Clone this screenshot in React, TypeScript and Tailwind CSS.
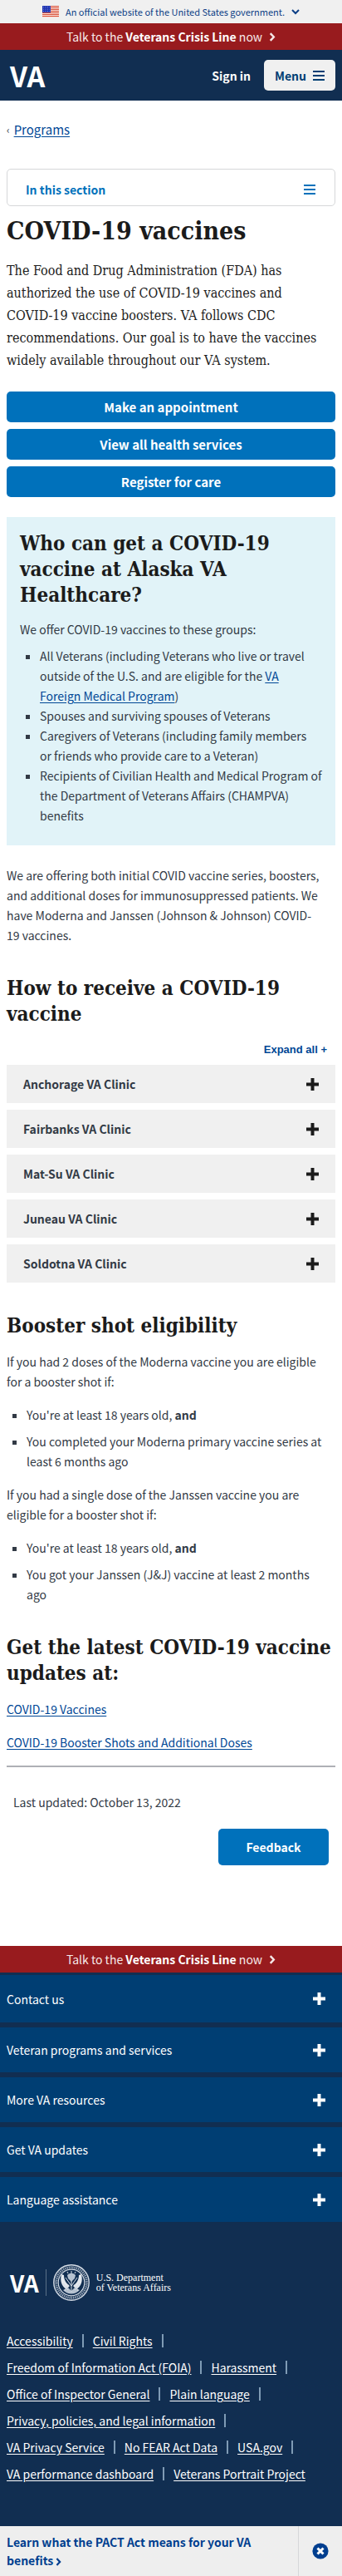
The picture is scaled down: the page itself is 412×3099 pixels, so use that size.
import React from "react";

const sans = "font-['Noto_Sans_CJK_SC','Liberation_Sans',sans-serif]";
const serif = "font-['DejaVu_Serif_Condensed','DejaVu_Serif',serif]";

function Bars({ className }: { className: string }) {
  return (
    <svg viewBox="0 0 14 12" className={className} fill="currentColor" aria-hidden="true">
      <rect y="0" width="14" height="2" />
      <rect y="5" width="14" height="2" />
      <rect y="10" width="14" height="2" />
    </svg>
  );
}

function Plus() {
  return (
    <svg viewBox="0 0 15 15" className="size-[15px] shrink-0" fill="currentColor" aria-hidden="true">
      <path d="M5.5 0h4v5.5H15v4H9.5V15h-4V9.500H0v-4h5.500z" />
    </svg>
  );
}

function ChevronRight({ className }: { className: string }) {
  return (
    <svg viewBox="0 0 8 12" className={className} fill="none" stroke="currentColor" strokeWidth="2.6" aria-hidden="true">
      <path d="M1.5 1.2 6 6 1.5 10.8" />
    </svg>
  );
}

function Flag() {
  return (
    <svg viewBox="0 0 20 14" className="h-[14px] w-5" aria-hidden="true">
      <rect width="20" height="14" fill="#fff" />
      {[0, 2, 4, 6, 8, 10, 12].map((y) => (
        <rect key={y} y={y} width="20" height="1.2" fill="#d9533b" />
      ))}
      <rect width="10" height="8" fill="#1e33b1" />
      {[1.5, 4, 6.5].map((y) =>
        [1.5, 4, 6.5, 9].map((x) => <circle key={`${x}-${y}`} cx={x} cy={y} r="0.5" fill="#9fb0ea" />)
      )}
    </svg>
  );
}

function Seal() {
  return (
    <svg viewBox="0 0 44 44" className="size-11" fill="none" stroke="#d6dde6" aria-hidden="true">
      <circle cx="22" cy="22" r="21.2" strokeWidth="1.4" />
      <circle cx="22" cy="22" r="18.4" strokeWidth="3" strokeDasharray="1.3 1" opacity="0.7" />
      <circle cx="22" cy="22" r="15.8" strokeWidth="1.2" />
      <path d="M10 12c-2 8 0 14 6 18l4-4c-4-3-7-7-7-13zM34 12c2 8 0 14-6 18l-4-4c4-3 7-7 7-13z" fill="#e4e9ef" stroke="none" />
      <path d="M17 13c3-3 7-3 10 0l-1 4-4 4-4-4zM12 31c6 6 14 6 20 0l-6-3-4 4-4-4z" fill="#b6c2d0" stroke="none" />
      <path d="m15 16 7 10 7-10M22 20v13M17 9l1 2M22 8v3M27 9l-1 2M12 23l6 8M32 23l-6 8M18 24l-4 8M26 24l4 8" strokeWidth="1" />
    </svg>
  );
}

function CrisisLine() {
  return (
    <a href="#crisis" className="flex h-8 items-center justify-center gap-2 bg-[#981b1e] text-[14px] leading-6 text-[#f6e9e9]">
      <span>
        Talk to the <strong className="text-white">Veterans Crisis Line</strong> now
      </span>
      <ChevronRight className="h-[11px] w-2" />
    </a>
  );
}

function Heading({ children, className }: { children: React.ReactNode; className: string }) {
  return <h2 className={`${serif} text-[24px] leading-[31px] font-bold text-[#1b1b1b] ${className}`}>{children}</h2>;
}

function TextLink({ children }: { children: React.ReactNode }) {
  return (
    <a href="#link" className="text-[#004795] underline underline-offset-2">
      {children}
    </a>
  );
}

const clinics = ["Anchorage VA Clinic", "Fairbanks VA Clinic", "Mat-Su VA Clinic", "Juneau VA Clinic", "Soldotna VA Clinic"];
const footerSections = ["Contact us", "Veteran programs and services", "More VA resources", "Get VA updates", "Language assistance"];
const footerLinks = [
  ["Accessibility", "Civil Rights"],
  ["Freedom of Information Act (FOIA)", "Harassment"],
  ["Office of Inspector General", "Plain language"],
  ["Privacy, policies, and legal information"],
  ["VA Privacy Service", "No FEAR Act Data", "USA.gov"],
  ["VA performance dashboard", "Veterans Portrait Project"],
];

export default function App() {
  return (
    <div className={`${sans} bg-white text-[14px] leading-6 text-[#323a45]`}>
      <button type="button" className="flex h-7 w-full items-center justify-center gap-2 bg-[#f0f0f0] text-[11px] text-[#0d3f86]">
        <Flag />
        <span>An official website of the United States government.</span>
        <svg viewBox="0 0 10 7" className="h-[7px] w-[10px]" fill="none" stroke="currentColor" strokeWidth="2" aria-hidden="true">
          <path d="m1 1 4 4 4-4" />
        </svg>
      </button>
      <CrisisLine />
      <header className="flex h-[61px] items-center justify-between bg-[#112e51] px-2">
        <a href="#home" className="pl-1 text-[34px] leading-none font-bold text-white" aria-label="VA home">
          VA
        </a>
        <div className="flex items-center gap-4">
          <button type="button" className="font-bold text-white">
            Sign in
          </button>
          <button type="button" className="flex h-[37px] items-center gap-2 rounded-[5px] bg-[#f0f0f0] px-[13px] font-bold text-[#003e73]">
            Menu
            <Bars className="h-3 w-[14px]" />
          </button>
        </div>
      </header>

      <main className="px-2">
        <nav aria-label="Breadcrumb" className="flex items-center gap-[5px] pt-[23px] text-[15px]">
          <span className="text-[12px]">‹</span>
          <TextLink>Programs</TextLink>
        </nav>
        <button
          type="button"
          className="mt-[35px] flex h-[45px] w-full items-center justify-between rounded-[5px] border border-[#d6d7d9] pt-1 pr-[23px] pl-[22px] font-bold text-[#0071bb]"
        >
          In this section
          <Bars className="h-3 w-[14px]" />
        </button>
        <h1 className={`${serif} mt-2 text-[30px] leading-[44px] font-bold text-[#1b1b1b]`}>COVID-19 vaccines</h1>
        <p className={`${serif} mt-3 pr-4 text-[16px] leading-[27px] text-[#212121]`}>
          The Food and Drug Administration (FDA) has authorized the use of COVID-19 vaccines and COVID-19 vaccine boosters. VA follows CDC
          recommendations. Our goal is to have the vaccines widely available throughout our VA system.
        </p>
        <div className="mt-6 flex flex-col gap-2">
          {["Make an appointment", "View all health services", "Register for care"].map((label) => (
            <a key={label} href="#action" className="flex h-[37px] items-center justify-center rounded-[5px] bg-[#0071bb] text-[15px] font-bold text-white">
              {label}
            </a>
          ))}
        </div>

        <section className="mt-6 bg-[#e1f3f8] px-4 pt-4 pb-6">
          <Heading className="">Who can get a COVID-19 vaccine at Alaska VA Healthcare?</Heading>
          <p className="mt-[14px]">We offer COVID-19 vaccines to these groups:</p>
          <ul className="mt-2 list-[square] pl-6">
            <li>
              All Veterans (including Veterans who live or travel outside of the U.S. and are eligible for the{" "}
              <TextLink>VA Foreign Medical Program</TextLink>)
            </li>
            <li>Spouses and surviving spouses of Veterans</li>
            <li>Caregivers of Veterans (including family members or&nbsp;friends who provide care to a Veteran)</li>
            <li>Recipients of Civilian Health and Medical Program of the Department of Veterans Affairs (CHAMPVA) benefits</li>
          </ul>
        </section>

        <p className="mt-6 pr-4">
          We are offering both initial COVID vaccine series, boosters, and additional doses for immunosuppressed patients. We have Moderna and
          Janssen (Johnson &amp; Johnson) COVID-19 vaccines.
        </p>

        <Heading className="mt-9">How to receive a COVID-19 vaccine</Heading>
        <div className="mt-4 flex justify-end pr-[10px]">
          <button type="button" className="font-['Liberation_Sans',sans-serif] text-[13px] leading-6 font-bold text-[#004795]">
            Expand all +
          </button>
        </div>
        <div className="mt-[6px] flex flex-col gap-2">
          {clinics.map((name) => (
            <button key={name} type="button" className="flex h-[46px] items-center justify-between bg-[#f0f0f0] pr-5 pl-5 font-bold">
              {name}
              <span className="text-[#1b1b1b]">
                <Plus />
              </span>
            </button>
          ))}
        </div>

        <Heading className="mt-9">Booster shot eligibility</Heading>
        <p className="mt-4 pr-4">If you had 2 doses of the Moderna vaccine you are eligible for a booster shot if:</p>
        <ul className="mt-4 flex list-[square] flex-col gap-2 pl-6">
          <li>
            You're at least 18 years old, <strong>and</strong>
          </li>
          <li>You completed your Moderna primary vaccine series at least 6 months ago</li>
        </ul>
        <p className="mt-4 pr-4">If you had a single dose of the Janssen vaccine you are eligible for a booster shot if:</p>
        <ul className="mt-4 flex list-[square] flex-col gap-2 pr-4 pl-6">
          <li>
            You're at least 18 years old, <strong>and</strong>
          </li>
          <li>You got your Janssen (J&amp;J) vaccine at least 2 months ago</li>
        </ul>

        <Heading className="mt-9">Get the latest COVID-19 vaccine updates at:</Heading>
        <p className="mt-4">
          <TextLink>COVID-19 Vaccines</TextLink>
        </p>
        <p className="mt-4">
          <TextLink>COVID-19 Booster Shots and Additional Doses</TextLink>
        </p>
        <hr className="mt-4 border-t-2 border-[#aeb0b5]" />
        <p className="mt-[30px] px-2">Last updated: October 13, 2022</p>
        <div className="mt-5 flex justify-end px-2">
          <button type="button" className="h-11 w-[133px] rounded-[5px] bg-[#0071bb] font-bold text-white">
            Feedback
          </button>
        </div>
      </main>

      <footer className="mt-[97px] bg-[#112e51] text-white">
        <CrisisLine />
        <div className="flex flex-col gap-[6px] pt-[3px]">
          {footerSections.map((name) => (
            <button key={name} type="button" className="flex h-[54px] items-center justify-between bg-[#003e73] pr-5 pl-2 first:h-[57px]">
              {name}
              <Plus />
            </button>
          ))}
        </div>
        <div className="px-2 pt-[51px] pb-[47px]">
          <div className="flex items-center">
            <span className="pl-1 text-[28px] leading-none font-bold">VA</span>
            <span className="ml-2 h-8 w-px bg-[#5b7188]" />
            <span className="ml-2">
              <Seal />
            </span>
            <span className="ml-2 font-['Liberation_Serif',serif] text-[12px] leading-3">
              U.S. Department
              <br />
              of Veterans Affairs
            </span>
          </div>
          <div className="mt-8">
            {footerLinks.map((row, i) => (
              <ul key={row[0]} className="flex h-8 items-center">
                {row.map((name, j) => (
                  <li key={name} className="flex items-center whitespace-nowrap">
                    <a href="#footer" className="underline underline-offset-2">
                      {name}
                    </a>
                    {(i < footerLinks.length - 1 || j < row.length - 1) && <span className="mx-[11px] h-4 w-[2px] bg-[#7f9bb5]" />}
                  </li>
                ))}
              </ul>
            ))}
          </div>
        </div>
      </footer>

      <aside className="flex h-[60px] bg-[#eeeeee]">
        <a href="#pact" className="flex-1 px-2 pt-2 pb-2 leading-[22px] font-bold text-[#003e8f]">
          Learn what the PACT Act means for your VA benefits <ChevronRight className="inline-block h-[10px] w-[7px]" />
        </a>
        <button type="button" aria-label="Close" className="flex w-[53px] items-center justify-center border-l border-[#d6d7d9]">
          <svg viewBox="0 0 20 20" className="size-5" aria-hidden="true">
            <circle cx="10" cy="10" r="9.6" fill="#003e8f" />
            <path d="m6.5 6.5 7 7M13.5 6.5l-7 7" stroke="#fff" strokeWidth="3" />
          </svg>
        </button>
      </aside>
    </div>
  );
}
